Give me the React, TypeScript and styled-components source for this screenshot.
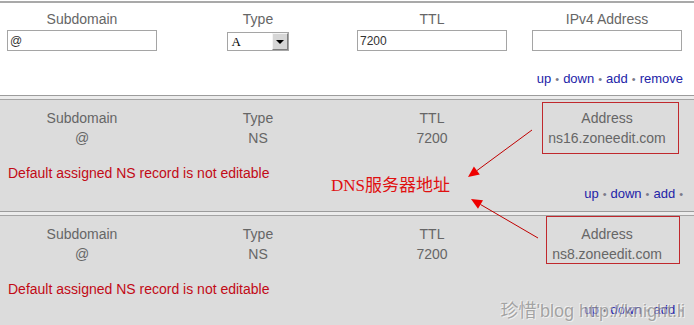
import React from "react";
import styled, { createGlobalStyle, css } from "styled-components";

interface iMark {
  top: number;
  bottom: number;
  left: number;
  width: number;
}

interface iRecord {
  id: number;
  subdomain: string;
  type: string;
  ttl: string;
  address: string;
  mark: iMark;
}

const records: iRecord[] = [
  {
    id: 1,
    subdomain: "@",
    type: "NS",
    ttl: "7200",
    address: "ns16.zoneedit.com",
    mark: { top: -6, bottom: -6, left: 30, width: 137 },
  },
  {
    id: 2,
    subdomain: "@",
    type: "NS",
    ttl: "7200",
    address: "ns8.zoneedit.com",
    mark: { top: -8, bottom: 0, left: 34, width: 134 },
  },
];

const LinkList = ({
  items,
  trailing,
  space,
}: {
  items: string[];
  trailing?: boolean;
  space: number;
}) => (
  <LinkBar $space={space}>
    {items.map((name, i) => (
      <React.Fragment key={name}>
        {i > 0 ? <Dot>•</Dot> : null}
        <Link href="#">{name}</Link>
      </React.Fragment>
    ))}
    {trailing ? <Dot>•</Dot> : null}
  </LinkBar>
);

const App = () => {
  return (
    <Page>
      <GlobalStyle />
      <TopSection>
        <Columns>
          <Column>
            <Label>Subdomain</Label>
            <TextInput defaultValue="@" />
          </Column>
          <Column>
            <Label>Type</Label>
            <FakeSelect>
              <SelectValue>A</SelectValue>
              <SelectButton>
                <Triangle />
              </SelectButton>
            </FakeSelect>
          </Column>
          <Column>
            <Label>TTL</Label>
            <TextInput defaultValue="7200" />
          </Column>
          <Column>
            <Label>IPv4 Address</Label>
            <TextInput defaultValue="" />
          </Column>
        </Columns>
        <LinkList items={["up", "down", "add", "remove"]} space={20} />
      </TopSection>

      {records.map((r) => (
        <React.Fragment key={r.id}>
          <Separator />
          <RecordSection>
            <Columns>
              <Column>
                <Label>Subdomain</Label>
                <Value>{r.subdomain}</Value>
              </Column>
              <Column>
                <Label>Type</Label>
                <Value>{r.type}</Value>
              </Column>
              <Column>
                <Label>TTL</Label>
                <Value>{r.ttl}</Value>
              </Column>
              <Column $mark={r.mark}>
                <Label>Address</Label>
                <Value>{r.address}</Value>
              </Column>
            </Columns>
            <Message>Default assigned NS record is not editable</Message>
            <LinkList items={["up", "down", "add"]} trailing space={3} />
          </RecordSection>
        </React.Fragment>
      ))}

      <Arrows width="694" height="325" viewBox="0 0 694 325">
        <line x1="532" y1="130" x2="477" y2="170.5" stroke="#c00000" strokeWidth="1" />
        <polygon points="468,177 479.8,174.5 473.9,166.5" fill="#ee0000" />
        <line x1="538" y1="238" x2="480.5" y2="204.5" stroke="#c00000" strokeWidth="1" />
        <polygon points="471,199 483,200.2 478,208.8" fill="#ee0000" />
      </Arrows>
      <Note>DNS服务器地址</Note>
      <Watermark>珍惜'blog http://knight.li</Watermark>
    </Page>
  );
};

export default App;

const GlobalStyle = createGlobalStyle`
  html, body {
    margin: 0;
    padding: 0;
    overflow: hidden;
    background: #dcdcdc;
  }
  body {
    font-family: "Liberation Sans", Arial, sans-serif;
  }
`;

const Page = styled.div`
  position: relative;
  width: 694px;
  height: 325px;
  overflow: hidden;
  background: #dcdcdc;
`;

const TopSection = styled.div`
  margin-top: 1px;
  border-top: 2px solid #a9a9a9;
  box-shadow: 0 -1px 0 #ffffff;
  background: #ffffff;
  padding: 6px 0 8px 0;
`;

const RecordSection = styled.div`
  background: #dcdcdc;
  padding: 8px 0 9px 0;
`;

const Separator = styled.div`
  height: 3px;
  border-top: 1px solid #9c9c9c;
  border-bottom: 1px solid #a4a4a4;
  background: #ececec;
`;

const Columns = styled.div`
  display: grid;
  grid-template-columns: 164px 188px 160px 190px;
  width: 702px;
`;

const Column = styled.div<{ $mark?: iMark }>`
  position: relative;
  display: flex;
  flex-direction: column;
  align-items: center;

  ${(p) =>
    p.$mark &&
    css`
      &::after {
        content: "";
        position: absolute;
        top: ${p.$mark.top}px;
        bottom: ${p.$mark.bottom}px;
        left: ${p.$mark.left}px;
        width: ${p.$mark.width}px;
        border: 1px solid #c0282d;
        box-sizing: border-box;
        pointer-events: none;
      }
    `}
`;

const Label = styled.div`
  font-size: 14px;
  line-height: 20px;
  color: #666666;
  white-space: nowrap;
`;

const Value = styled.div`
  font-size: 14px;
  line-height: 20px;
  color: #666666;
  white-space: nowrap;
`;

const TextInput = styled.input`
  box-sizing: border-box;
  width: 150px;
  height: 21px;
  margin-top: 1px;
  padding: 0 2px;
  border: 1px solid #a5a5a5;
  background: #ffffff;
  font-family: "Liberation Sans", Arial, sans-serif;
  font-size: 12px;
  color: #333333;
  outline: none;
`;

const FakeSelect = styled.div`
  box-sizing: border-box;
  display: flex;
  align-items: center;
  justify-content: space-between;
  width: 62px;
  height: 19px;
  margin-top: 3px;
  margin-left: -1px;
  border: 1px solid #a5a5a5;
  background: #ffffff;
`;

const SelectValue = styled.span`
  padding-left: 4px;
  font-family: "Liberation Serif", "Times New Roman", serif;
  font-size: 13px;
  color: #000000;
`;

const SelectButton = styled.span`
  box-sizing: border-box;
  display: flex;
  align-items: center;
  justify-content: center;
  width: 16px;
  height: 17px;
  border: 1px solid #808080;
  border-top-color: #f4f4f4;
  border-left-color: #f4f4f4;
  background: #d6d6d6;
`;

const Triangle = styled.span`
  width: 0;
  height: 0;
  border-left: 4px solid transparent;
  border-right: 4px solid transparent;
  border-top: 4px solid #000000;
`;

const LinkBar = styled.div<{ $space: number }>`
  display: flex;
  justify-content: flex-end;
  align-items: baseline;
  gap: 4px;
  margin-top: ${(p) => p.$space}px;
  padding-right: 11px;
  font-size: 13px;
  line-height: 16px;
`;

const Link = styled.a`
  color: #2323a8;
  text-decoration: none;
`;

const Dot = styled.span`
  color: #7a7a8a;
  font-size: 11px;
`;

const Message = styled.div`
  margin-top: 15px;
  padding-left: 8px;
  font-size: 14px;
  line-height: 20px;
  color: #c20a16;
`;

const Arrows = styled.svg`
  position: absolute;
  top: 0;
  left: 0;
  pointer-events: none;
`;

const Note = styled.span`
  position: absolute;
  left: 331px;
  top: 175px;
  font-family: "Liberation Serif", "Noto Sans CJK SC", serif;
  font-size: 17px;
  line-height: 22px;
  color: #e01010;
  white-space: nowrap;
`;

const Watermark = styled.span`
  position: absolute;
  right: 9px;
  bottom: 3px;
  font-family: "Liberation Sans", "Noto Sans CJK SC", sans-serif;
  font-size: 18px;
  line-height: 22px;
  color: #8c8c8c;
  white-space: nowrap;
  text-shadow: 1px 1px 0 rgba(255, 255, 255, 0.8), -1px -1px 0 rgba(255, 255, 255, 0.8);
  opacity: 0.7;
  pointer-events: none;
`;
